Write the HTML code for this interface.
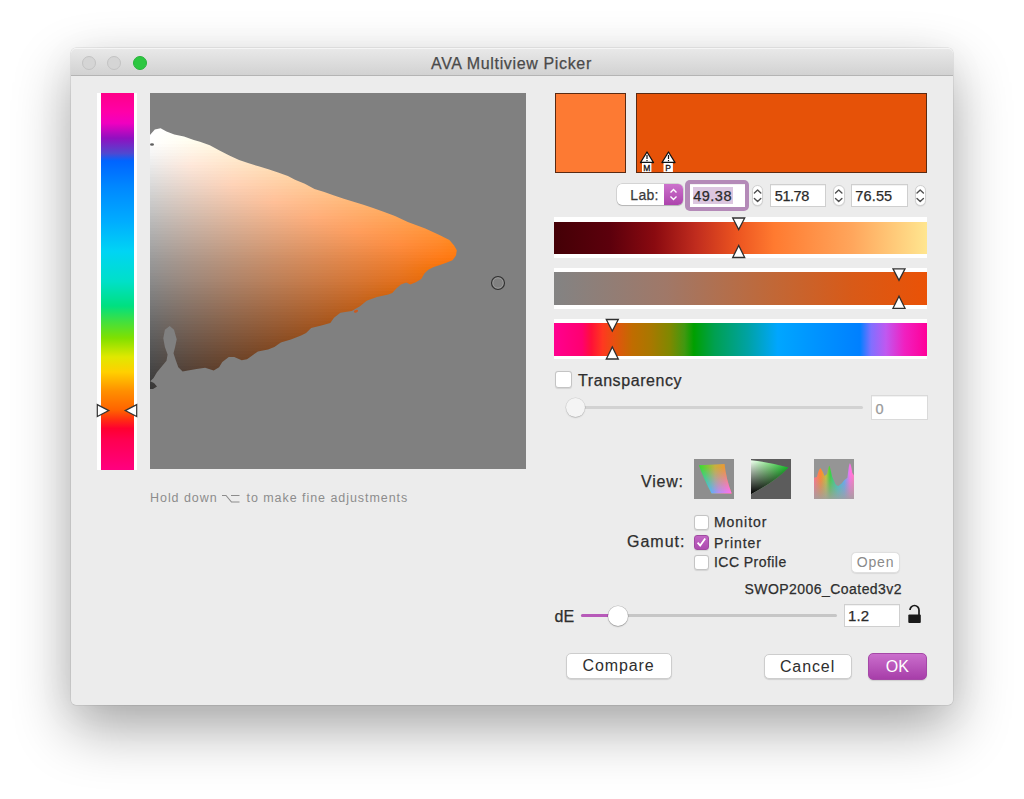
<!DOCTYPE html>
<html><head><meta charset="utf-8">
<style>
html,body{margin:0;padding:0;width:1024px;height:799px;overflow:hidden;background:#ffffff;}
body{position:relative;font-family:"Liberation Sans",sans-serif;}
.a{position:absolute;}
#win{position:absolute;left:71px;top:48px;width:881.5px;height:657px;border-radius:5px;background:#ececec;
 box-shadow:0 0 0 0.5px rgba(0,0,0,0.13),0 24px 58px rgba(0,0,0,0.33),0 8px 40px rgba(0,0,0,0.05);}
#tb{position:absolute;left:71px;top:48px;width:881.5px;height:28px;border-radius:5px 5px 0 0;
 background:linear-gradient(#e9e9e9,#d2d2d2);border-bottom:1px solid #b4b4b4;box-sizing:border-box;box-shadow:inset 0 1px 0 rgba(255,255,255,0.55);}
.tl{position:absolute;width:14px;height:14px;border-radius:50%;box-sizing:border-box;}
.lbl{position:absolute;color:#2e2e2e;white-space:nowrap;line-height:1;-webkit-text-stroke:0.25px currentColor;}
.cb{position:absolute;width:15px;height:15px;box-sizing:border-box;border-radius:3px;background:#fff;border:1px solid #c4c4c4;box-shadow:0 0.5px 1px rgba(0,0,0,0.1);}
.fld{position:absolute;background:#fff;border:1px solid #cfcfcf;box-sizing:border-box;box-shadow:inset 0 1px 0 rgba(0,0,0,0.05);}
.btn{position:absolute;background:#fff;border-radius:5px;box-sizing:border-box;border:1px solid #cdcdcd;box-shadow:0 1px 1px rgba(0,0,0,0.12);color:#2e2e2e;font-size:16px;text-align:center;}
.step{position:absolute;width:12px;height:21px;box-sizing:border-box;border-radius:6px;background:#fff;border:1px solid #d0d0d0;box-shadow:0 0.5px 1px rgba(0,0,0,0.1);}
</style></head><body>
<div id="win"></div>
<div id="tb"></div>
<div class="tl" style="left:82.4px;top:55.5px;background:#d5d5d5;border:1px solid #c3c3c3;"></div>
<div class="tl" style="left:107.4px;top:55.5px;background:#d5d5d5;border:1px solid #c3c3c3;"></div>
<div class="tl" style="left:132.9px;top:55.5px;background:#2dc741;border:1px solid #27b33a;"></div>
<div class="lbl" style="left:431px;top:56px;font-size:16px;letter-spacing:0.65px;color:#4a4a4a;">AVA Multiview Picker</div>

<!-- hue strip -->
<div class="a" style="left:96.8px;top:92.5px;width:40.4px;height:377px;background:#fff;"></div>
<div class="a" style="left:100.5px;top:92.5px;width:33px;height:377px;background:linear-gradient(to bottom,#ff0088 0%,#ff00a8 5%,#f000c0 8%,#9010c0 12%,#5048d0 16%,#0064ff 18%,#0088ff 25%,#00acff 34%,#00d4f4 42%,#00e0c8 50%,#00e080 56.5%,#40e040 60.5%,#80e000 65%,#e0e800 70%,#ffd000 74%,#ff9000 79%,#ff6400 84%,#ff3010 86.5%,#ff0030 89%,#ff0050 92%,#ff0080 100%);"></div>
<svg class="a" style="left:0;top:0" width="1024" height="799">
<polygon points="97.3,404.6 108.8,410.6 97.3,416.6" fill="#fff" stroke="#333" stroke-width="1.2" stroke-linejoin="miter"/>
<polygon points="136.7,404.6 125.2,410.6 136.7,416.6" fill="#fff" stroke="#333" stroke-width="1.2"/>
</svg>

<!-- plot -->
<div class="a" style="left:150px;top:92.5px;width:376.4px;height:376px;background:#808080;"></div>
<svg width="1024" height="799" style="position:absolute;left:0;top:0">
<defs><clipPath id="shp"><polygon points="149.5,135.5 154.8,129.6 160.6,128.2 166.5,131.6 174.3,134.5 184.0,136.5 193.8,139.9 200.0,141.8 209.8,145.3 219.5,150.6 229.3,155.5 239.1,159.9 248.8,163.3 258.6,166.3 268.4,169.2 278.1,172.6 287.9,176.0 295.0,179.8 304.8,183.7 314.5,189.0 324.3,192.0 334.1,195.4 343.8,198.8 353.6,201.7 363.4,204.7 373.1,208.1 382.9,211.5 395.0,215.9 407.8,222.0 425.3,228.4 439.4,234.9 449.4,240.0 454.1,245.5 456.8,250.2 456.0,255.6 452.5,260.3 446.3,262.7 440.0,265.0 433.8,267.0 428.3,269.7 424.4,273.6 421.3,279.0 415.8,282.2 410.3,284.5 406.4,282.6 400.9,284.5 396.3,288.4 392.3,293.1 388.3,294.5 376.9,297.0 366.7,300.8 360.4,305.9 355.3,309.0 351.8,310.9 340.4,312.8 334.0,317.8 330.3,322.9 321.4,325.5 311.2,328.0 306.1,333.1 301.1,335.6 290.9,339.4 280.8,342.6 274.4,347.0 268.1,349.6 257.9,351.5 251.6,355.9 247.0,359.2 241.7,360.3 234.2,357.1 228.8,357.1 222.3,361.9 219.1,367.3 213.7,370.5 205.1,367.8 196.6,368.9 188.0,370.5 182.6,371.6 178.3,367.3 175.6,359.7 173.5,353.3 175.1,346.9 176.7,339.3 174.0,329.7 169.7,325.9 164.9,329.7 163.3,338.3 164.9,346.9 167.6,354.4 166.5,360.8 161.1,367.3 156.8,372.6 153.6,378.0 150.2,381.2 154.0,383.0 157.0,386.5 153.0,389.0 149.5,389.0"/></clipPath><linearGradient id="g0" gradientUnits="userSpaceOnUse" x1="150.4" y1="0" x2="481.3" y2="0"><stop offset="0.000" stop-color="#ffffff"/><stop offset="0.125" stop-color="#fffffb"/><stop offset="0.250" stop-color="#ffffe9"/><stop offset="0.375" stop-color="#ffffd7"/><stop offset="0.500" stop-color="#fffdc5"/><stop offset="0.625" stop-color="#fff9b3"/><stop offset="0.750" stop-color="#fff4a0"/><stop offset="0.875" stop-color="#ffee8c"/><stop offset="1.000" stop-color="#ffe777"/></linearGradient><linearGradient id="g1" gradientUnits="userSpaceOnUse" x1="150.4" y1="0" x2="481.3" y2="0"><stop offset="0.000" stop-color="#ffffff"/><stop offset="0.125" stop-color="#fffff8"/><stop offset="0.250" stop-color="#ffffe6"/><stop offset="0.375" stop-color="#ffffd4"/><stop offset="0.500" stop-color="#fffac2"/><stop offset="0.625" stop-color="#fff6b0"/><stop offset="0.750" stop-color="#fff19d"/><stop offset="0.875" stop-color="#ffeb89"/><stop offset="1.000" stop-color="#ffe474"/></linearGradient><linearGradient id="g2" gradientUnits="userSpaceOnUse" x1="150.4" y1="0" x2="481.3" y2="0"><stop offset="0.000" stop-color="#ffffff"/><stop offset="0.125" stop-color="#fffff6"/><stop offset="0.250" stop-color="#ffffe4"/><stop offset="0.375" stop-color="#fffcd2"/><stop offset="0.500" stop-color="#fff8c0"/><stop offset="0.625" stop-color="#fff3ad"/><stop offset="0.750" stop-color="#ffee9b"/><stop offset="0.875" stop-color="#ffe887"/><stop offset="1.000" stop-color="#ffe272"/></linearGradient><linearGradient id="g3" gradientUnits="userSpaceOnUse" x1="150.4" y1="0" x2="481.3" y2="0"><stop offset="0.000" stop-color="#ffffff"/><stop offset="0.125" stop-color="#fffff3"/><stop offset="0.250" stop-color="#fffde1"/><stop offset="0.375" stop-color="#fff9cf"/><stop offset="0.500" stop-color="#fff5bd"/><stop offset="0.625" stop-color="#fff0ab"/><stop offset="0.750" stop-color="#ffec98"/><stop offset="0.875" stop-color="#ffe684"/><stop offset="1.000" stop-color="#ffdf6f"/></linearGradient><linearGradient id="g4" gradientUnits="userSpaceOnUse" x1="150.4" y1="0" x2="481.3" y2="0"><stop offset="0.000" stop-color="#ffffff"/><stop offset="0.125" stop-color="#fffef0"/><stop offset="0.250" stop-color="#fffbde"/><stop offset="0.375" stop-color="#fff7cd"/><stop offset="0.500" stop-color="#fff2bb"/><stop offset="0.625" stop-color="#ffeea8"/><stop offset="0.750" stop-color="#ffe996"/><stop offset="0.875" stop-color="#ffe382"/><stop offset="1.000" stop-color="#ffdc6c"/></linearGradient><linearGradient id="g5" gradientUnits="userSpaceOnUse" x1="150.4" y1="0" x2="481.3" y2="0"><stop offset="0.000" stop-color="#ffffff"/><stop offset="0.125" stop-color="#fffcee"/><stop offset="0.250" stop-color="#fff8dc"/><stop offset="0.375" stop-color="#fff4ca"/><stop offset="0.500" stop-color="#fff0b8"/><stop offset="0.625" stop-color="#ffeba6"/><stop offset="0.750" stop-color="#ffe693"/><stop offset="0.875" stop-color="#ffe07f"/><stop offset="1.000" stop-color="#ffda6a"/></linearGradient><linearGradient id="g6" gradientUnits="userSpaceOnUse" x1="150.4" y1="0" x2="481.3" y2="0"><stop offset="0.000" stop-color="#fdfdfd"/><stop offset="0.125" stop-color="#fff9eb"/><stop offset="0.250" stop-color="#fff5d9"/><stop offset="0.375" stop-color="#fff1c7"/><stop offset="0.500" stop-color="#ffedb5"/><stop offset="0.625" stop-color="#ffe8a3"/><stop offset="0.750" stop-color="#ffe391"/><stop offset="0.875" stop-color="#ffde7d"/><stop offset="1.000" stop-color="#ffd767"/></linearGradient><linearGradient id="g7" gradientUnits="userSpaceOnUse" x1="150.4" y1="0" x2="481.3" y2="0"><stop offset="0.000" stop-color="#fafafa"/><stop offset="0.125" stop-color="#fff6e8"/><stop offset="0.250" stop-color="#fff3d7"/><stop offset="0.375" stop-color="#ffeec5"/><stop offset="0.500" stop-color="#ffeab3"/><stop offset="0.625" stop-color="#ffe6a1"/><stop offset="0.750" stop-color="#ffe18e"/><stop offset="0.875" stop-color="#ffdb7a"/><stop offset="1.000" stop-color="#ffd465"/></linearGradient><linearGradient id="g8" gradientUnits="userSpaceOnUse" x1="150.4" y1="0" x2="481.3" y2="0"><stop offset="0.000" stop-color="#f7f7f7"/><stop offset="0.125" stop-color="#fff4e6"/><stop offset="0.250" stop-color="#fff0d4"/><stop offset="0.375" stop-color="#ffecc2"/><stop offset="0.500" stop-color="#ffe7b0"/><stop offset="0.625" stop-color="#ffe39e"/><stop offset="0.750" stop-color="#ffde8c"/><stop offset="0.875" stop-color="#ffd878"/><stop offset="1.000" stop-color="#ffd162"/></linearGradient><linearGradient id="g9" gradientUnits="userSpaceOnUse" x1="150.4" y1="0" x2="481.3" y2="0"><stop offset="0.000" stop-color="#f5f5f5"/><stop offset="0.125" stop-color="#fff1e3"/><stop offset="0.250" stop-color="#ffedd1"/><stop offset="0.375" stop-color="#ffe9c0"/><stop offset="0.500" stop-color="#ffe5ae"/><stop offset="0.625" stop-color="#ffe09c"/><stop offset="0.750" stop-color="#ffdb89"/><stop offset="0.875" stop-color="#ffd575"/><stop offset="1.000" stop-color="#ffcf5f"/></linearGradient><linearGradient id="g10" gradientUnits="userSpaceOnUse" x1="150.4" y1="0" x2="481.3" y2="0"><stop offset="0.000" stop-color="#f2f2f2"/><stop offset="0.125" stop-color="#ffeee0"/><stop offset="0.250" stop-color="#ffeacf"/><stop offset="0.375" stop-color="#ffe6bd"/><stop offset="0.500" stop-color="#ffe2ab"/><stop offset="0.625" stop-color="#ffde99"/><stop offset="0.750" stop-color="#ffd987"/><stop offset="0.875" stop-color="#ffd373"/><stop offset="1.000" stop-color="#ffcc5d"/></linearGradient><linearGradient id="g11" gradientUnits="userSpaceOnUse" x1="150.4" y1="0" x2="481.3" y2="0"><stop offset="0.000" stop-color="#efefef"/><stop offset="0.125" stop-color="#ffecde"/><stop offset="0.250" stop-color="#ffe8cc"/><stop offset="0.375" stop-color="#ffe4ba"/><stop offset="0.500" stop-color="#ffdfa9"/><stop offset="0.625" stop-color="#ffdb97"/><stop offset="0.750" stop-color="#ffd684"/><stop offset="0.875" stop-color="#ffd070"/><stop offset="1.000" stop-color="#ffc95a"/></linearGradient><linearGradient id="g12" gradientUnits="userSpaceOnUse" x1="150.4" y1="0" x2="481.3" y2="0"><stop offset="0.000" stop-color="#ededed"/><stop offset="0.125" stop-color="#ffe9db"/><stop offset="0.250" stop-color="#ffe5ca"/><stop offset="0.375" stop-color="#ffe1b8"/><stop offset="0.500" stop-color="#ffdda6"/><stop offset="0.625" stop-color="#ffd894"/><stop offset="0.750" stop-color="#ffd382"/><stop offset="0.875" stop-color="#ffcd6e"/><stop offset="1.000" stop-color="#ffc758"/></linearGradient><linearGradient id="g13" gradientUnits="userSpaceOnUse" x1="150.4" y1="0" x2="481.3" y2="0"><stop offset="0.000" stop-color="#eaeaea"/><stop offset="0.125" stop-color="#fee6d8"/><stop offset="0.250" stop-color="#ffe3c7"/><stop offset="0.375" stop-color="#ffdeb5"/><stop offset="0.500" stop-color="#ffdaa4"/><stop offset="0.625" stop-color="#ffd692"/><stop offset="0.750" stop-color="#ffd17f"/><stop offset="0.875" stop-color="#ffcb6b"/><stop offset="1.000" stop-color="#ffc455"/></linearGradient><linearGradient id="g14" gradientUnits="userSpaceOnUse" x1="150.4" y1="0" x2="481.3" y2="0"><stop offset="0.000" stop-color="#e7e7e7"/><stop offset="0.125" stop-color="#fbe4d6"/><stop offset="0.250" stop-color="#ffe0c4"/><stop offset="0.375" stop-color="#ffdcb3"/><stop offset="0.500" stop-color="#ffd8a1"/><stop offset="0.625" stop-color="#ffd38f"/><stop offset="0.750" stop-color="#ffce7d"/><stop offset="0.875" stop-color="#ffc869"/><stop offset="1.000" stop-color="#ffc152"/></linearGradient><linearGradient id="g15" gradientUnits="userSpaceOnUse" x1="150.4" y1="0" x2="481.3" y2="0"><stop offset="0.000" stop-color="#e5e5e5"/><stop offset="0.125" stop-color="#f8e1d3"/><stop offset="0.250" stop-color="#ffddc2"/><stop offset="0.375" stop-color="#ffd9b0"/><stop offset="0.500" stop-color="#ffd59f"/><stop offset="0.625" stop-color="#ffd08d"/><stop offset="0.750" stop-color="#ffcb7a"/><stop offset="0.875" stop-color="#ffc566"/><stop offset="1.000" stop-color="#ffbf50"/></linearGradient><linearGradient id="g16" gradientUnits="userSpaceOnUse" x1="150.4" y1="0" x2="481.3" y2="0"><stop offset="0.000" stop-color="#e2e2e2"/><stop offset="0.125" stop-color="#f6ded1"/><stop offset="0.250" stop-color="#ffdbbf"/><stop offset="0.375" stop-color="#ffd7ae"/><stop offset="0.500" stop-color="#ffd29c"/><stop offset="0.625" stop-color="#ffce8a"/><stop offset="0.750" stop-color="#ffc978"/><stop offset="0.875" stop-color="#ffc364"/><stop offset="1.000" stop-color="#ffbc4d"/></linearGradient><linearGradient id="g17" gradientUnits="userSpaceOnUse" x1="150.4" y1="0" x2="481.3" y2="0"><stop offset="0.000" stop-color="#dfdfdf"/><stop offset="0.125" stop-color="#f3dcce"/><stop offset="0.250" stop-color="#ffd8bd"/><stop offset="0.375" stop-color="#ffd4ab"/><stop offset="0.500" stop-color="#ffd09a"/><stop offset="0.625" stop-color="#ffcb88"/><stop offset="0.750" stop-color="#ffc675"/><stop offset="0.875" stop-color="#ffc061"/><stop offset="1.000" stop-color="#ffb94b"/></linearGradient><linearGradient id="g18" gradientUnits="userSpaceOnUse" x1="150.4" y1="0" x2="481.3" y2="0"><stop offset="0.000" stop-color="#dddddd"/><stop offset="0.125" stop-color="#f0d9cb"/><stop offset="0.250" stop-color="#ffd5ba"/><stop offset="0.375" stop-color="#ffd1a9"/><stop offset="0.500" stop-color="#ffcd97"/><stop offset="0.625" stop-color="#ffc885"/><stop offset="0.750" stop-color="#ffc373"/><stop offset="0.875" stop-color="#ffbd5f"/><stop offset="1.000" stop-color="#ffb748"/></linearGradient><linearGradient id="g19" gradientUnits="userSpaceOnUse" x1="150.4" y1="0" x2="481.3" y2="0"><stop offset="0.000" stop-color="#dadada"/><stop offset="0.125" stop-color="#eed6c9"/><stop offset="0.250" stop-color="#ffd3b7"/><stop offset="0.375" stop-color="#ffcfa6"/><stop offset="0.500" stop-color="#ffca95"/><stop offset="0.625" stop-color="#ffc683"/><stop offset="0.750" stop-color="#ffc170"/><stop offset="0.875" stop-color="#ffbb5c"/><stop offset="1.000" stop-color="#ffb445"/></linearGradient><linearGradient id="g20" gradientUnits="userSpaceOnUse" x1="150.4" y1="0" x2="481.3" y2="0"><stop offset="0.000" stop-color="#d7d7d7"/><stop offset="0.125" stop-color="#ebd4c6"/><stop offset="0.250" stop-color="#fcd0b5"/><stop offset="0.375" stop-color="#ffcca4"/><stop offset="0.500" stop-color="#ffc892"/><stop offset="0.625" stop-color="#ffc380"/><stop offset="0.750" stop-color="#ffbe6e"/><stop offset="0.875" stop-color="#ffb85a"/><stop offset="1.000" stop-color="#ffb143"/></linearGradient><linearGradient id="g21" gradientUnits="userSpaceOnUse" x1="150.4" y1="0" x2="481.3" y2="0"><stop offset="0.000" stop-color="#d5d5d5"/><stop offset="0.125" stop-color="#e8d1c4"/><stop offset="0.250" stop-color="#facdb2"/><stop offset="0.375" stop-color="#ffc9a1"/><stop offset="0.500" stop-color="#ffc590"/><stop offset="0.625" stop-color="#ffc17e"/><stop offset="0.750" stop-color="#ffbc6b"/><stop offset="0.875" stop-color="#ffb657"/><stop offset="1.000" stop-color="#ffaf40"/></linearGradient><linearGradient id="g22" gradientUnits="userSpaceOnUse" x1="150.4" y1="0" x2="481.3" y2="0"><stop offset="0.000" stop-color="#d2d2d2"/><stop offset="0.125" stop-color="#e6cfc1"/><stop offset="0.250" stop-color="#f7cbb0"/><stop offset="0.375" stop-color="#ffc79f"/><stop offset="0.500" stop-color="#ffc38d"/><stop offset="0.625" stop-color="#ffbe7b"/><stop offset="0.750" stop-color="#ffb969"/><stop offset="0.875" stop-color="#ffb355"/><stop offset="1.000" stop-color="#ffac3d"/></linearGradient><linearGradient id="g23" gradientUnits="userSpaceOnUse" x1="150.4" y1="0" x2="481.3" y2="0"><stop offset="0.000" stop-color="#d0d0cf"/><stop offset="0.125" stop-color="#e3ccbe"/><stop offset="0.250" stop-color="#f4c8ad"/><stop offset="0.375" stop-color="#ffc49c"/><stop offset="0.500" stop-color="#ffc08b"/><stop offset="0.625" stop-color="#ffbb79"/><stop offset="0.750" stop-color="#ffb666"/><stop offset="0.875" stop-color="#ffb052"/><stop offset="1.000" stop-color="#ffa93a"/></linearGradient><linearGradient id="g24" gradientUnits="userSpaceOnUse" x1="150.4" y1="0" x2="481.3" y2="0"><stop offset="0.000" stop-color="#cdcdcd"/><stop offset="0.125" stop-color="#e0c9bc"/><stop offset="0.250" stop-color="#f2c6ab"/><stop offset="0.375" stop-color="#ffc29a"/><stop offset="0.500" stop-color="#ffbd88"/><stop offset="0.625" stop-color="#ffb977"/><stop offset="0.750" stop-color="#ffb464"/><stop offset="0.875" stop-color="#ffae50"/><stop offset="1.000" stop-color="#ffa738"/></linearGradient><linearGradient id="g25" gradientUnits="userSpaceOnUse" x1="150.4" y1="0" x2="481.3" y2="0"><stop offset="0.000" stop-color="#cacaca"/><stop offset="0.125" stop-color="#dec7b9"/><stop offset="0.250" stop-color="#efc3a8"/><stop offset="0.375" stop-color="#ffbf97"/><stop offset="0.500" stop-color="#ffbb86"/><stop offset="0.625" stop-color="#ffb674"/><stop offset="0.750" stop-color="#ffb162"/><stop offset="0.875" stop-color="#ffab4d"/><stop offset="1.000" stop-color="#ffa435"/></linearGradient><linearGradient id="g26" gradientUnits="userSpaceOnUse" x1="150.4" y1="0" x2="481.3" y2="0"><stop offset="0.000" stop-color="#c8c8c8"/><stop offset="0.125" stop-color="#dbc4b7"/><stop offset="0.250" stop-color="#ecc1a6"/><stop offset="0.375" stop-color="#fcbd95"/><stop offset="0.500" stop-color="#ffb883"/><stop offset="0.625" stop-color="#ffb472"/><stop offset="0.750" stop-color="#ffaf5f"/><stop offset="0.875" stop-color="#ffa94b"/><stop offset="1.000" stop-color="#ffa232"/></linearGradient><linearGradient id="g27" gradientUnits="userSpaceOnUse" x1="150.4" y1="0" x2="481.3" y2="0"><stop offset="0.000" stop-color="#c5c5c5"/><stop offset="0.125" stop-color="#d8c2b4"/><stop offset="0.250" stop-color="#e9bea3"/><stop offset="0.375" stop-color="#f9ba92"/><stop offset="0.500" stop-color="#ffb681"/><stop offset="0.625" stop-color="#ffb16f"/><stop offset="0.750" stop-color="#ffac5d"/><stop offset="0.875" stop-color="#ffa648"/><stop offset="1.000" stop-color="#ff9f2f"/></linearGradient><linearGradient id="g28" gradientUnits="userSpaceOnUse" x1="150.4" y1="0" x2="481.3" y2="0"><stop offset="0.000" stop-color="#c3c3c3"/><stop offset="0.125" stop-color="#d6bfb2"/><stop offset="0.250" stop-color="#e7bba1"/><stop offset="0.375" stop-color="#f6b790"/><stop offset="0.500" stop-color="#ffb37f"/><stop offset="0.625" stop-color="#ffae6d"/><stop offset="0.750" stop-color="#ffa95a"/><stop offset="0.875" stop-color="#ffa345"/><stop offset="1.000" stop-color="#ff9c2c"/></linearGradient><linearGradient id="g29" gradientUnits="userSpaceOnUse" x1="150.4" y1="0" x2="481.3" y2="0"><stop offset="0.000" stop-color="#c0c0c0"/><stop offset="0.125" stop-color="#d3bdaf"/><stop offset="0.250" stop-color="#e4b99e"/><stop offset="0.375" stop-color="#f4b58d"/><stop offset="0.500" stop-color="#ffb17c"/><stop offset="0.625" stop-color="#ffac6a"/><stop offset="0.750" stop-color="#ffa758"/><stop offset="0.875" stop-color="#ffa143"/><stop offset="1.000" stop-color="#ff9a29"/></linearGradient><linearGradient id="g30" gradientUnits="userSpaceOnUse" x1="150.4" y1="0" x2="481.3" y2="0"><stop offset="0.000" stop-color="#bdbdbd"/><stop offset="0.125" stop-color="#d0baad"/><stop offset="0.250" stop-color="#e1b69c"/><stop offset="0.375" stop-color="#f1b28b"/><stop offset="0.500" stop-color="#ffae7a"/><stop offset="0.625" stop-color="#ffa968"/><stop offset="0.750" stop-color="#ffa455"/><stop offset="0.875" stop-color="#ff9e40"/><stop offset="1.000" stop-color="#ff9726"/></linearGradient><linearGradient id="g31" gradientUnits="userSpaceOnUse" x1="150.4" y1="0" x2="481.3" y2="0"><stop offset="0.000" stop-color="#bbbbbb"/><stop offset="0.125" stop-color="#ceb7aa"/><stop offset="0.250" stop-color="#dfb499"/><stop offset="0.375" stop-color="#eeb088"/><stop offset="0.500" stop-color="#fcab77"/><stop offset="0.625" stop-color="#ffa766"/><stop offset="0.750" stop-color="#ffa253"/><stop offset="0.875" stop-color="#ff9c3e"/><stop offset="1.000" stop-color="#ff9523"/></linearGradient><linearGradient id="g32" gradientUnits="userSpaceOnUse" x1="150.4" y1="0" x2="481.3" y2="0"><stop offset="0.000" stop-color="#b8b8b8"/><stop offset="0.125" stop-color="#cbb5a8"/><stop offset="0.250" stop-color="#dcb197"/><stop offset="0.375" stop-color="#ebad86"/><stop offset="0.500" stop-color="#faa975"/><stop offset="0.625" stop-color="#ffa463"/><stop offset="0.750" stop-color="#ff9f51"/><stop offset="0.875" stop-color="#ff993b"/><stop offset="1.000" stop-color="#ff921f"/></linearGradient><linearGradient id="g33" gradientUnits="userSpaceOnUse" x1="150.4" y1="0" x2="481.3" y2="0"><stop offset="0.000" stop-color="#b6b6b6"/><stop offset="0.125" stop-color="#c9b2a5"/><stop offset="0.250" stop-color="#d9af94"/><stop offset="0.375" stop-color="#e9ab84"/><stop offset="0.500" stop-color="#f7a672"/><stop offset="0.625" stop-color="#ffa261"/><stop offset="0.750" stop-color="#ff9d4e"/><stop offset="0.875" stop-color="#ff9639"/><stop offset="1.000" stop-color="#ff8f1c"/></linearGradient><linearGradient id="g34" gradientUnits="userSpaceOnUse" x1="150.4" y1="0" x2="481.3" y2="0"><stop offset="0.000" stop-color="#b3b3b3"/><stop offset="0.125" stop-color="#c6b0a3"/><stop offset="0.250" stop-color="#d7ac92"/><stop offset="0.375" stop-color="#e6a881"/><stop offset="0.500" stop-color="#f4a470"/><stop offset="0.625" stop-color="#ff9f5e"/><stop offset="0.750" stop-color="#ff9a4c"/><stop offset="0.875" stop-color="#ff9436"/><stop offset="1.000" stop-color="#ff8d18"/></linearGradient><linearGradient id="g35" gradientUnits="userSpaceOnUse" x1="150.4" y1="0" x2="481.3" y2="0"><stop offset="0.000" stop-color="#b1b1b1"/><stop offset="0.125" stop-color="#c3ada0"/><stop offset="0.250" stop-color="#d4aa90"/><stop offset="0.375" stop-color="#e3a67f"/><stop offset="0.500" stop-color="#f1a16e"/><stop offset="0.625" stop-color="#fe9d5c"/><stop offset="0.750" stop-color="#ff9849"/><stop offset="0.875" stop-color="#ff9134"/><stop offset="1.000" stop-color="#ff8a14"/></linearGradient><linearGradient id="g36" gradientUnits="userSpaceOnUse" x1="150.4" y1="0" x2="481.3" y2="0"><stop offset="0.000" stop-color="#aeaeae"/><stop offset="0.125" stop-color="#c1ab9e"/><stop offset="0.250" stop-color="#d1a78d"/><stop offset="0.375" stop-color="#e0a37c"/><stop offset="0.500" stop-color="#ee9f6b"/><stop offset="0.625" stop-color="#fb9a5a"/><stop offset="0.750" stop-color="#ff9547"/><stop offset="0.875" stop-color="#ff8f31"/><stop offset="1.000" stop-color="#ff880f"/></linearGradient><linearGradient id="g37" gradientUnits="userSpaceOnUse" x1="150.4" y1="0" x2="481.3" y2="0"><stop offset="0.000" stop-color="#acacac"/><stop offset="0.125" stop-color="#bea89b"/><stop offset="0.250" stop-color="#cfa58b"/><stop offset="0.375" stop-color="#dea17a"/><stop offset="0.500" stop-color="#eb9c69"/><stop offset="0.625" stop-color="#f89857"/><stop offset="0.750" stop-color="#ff9345"/><stop offset="0.875" stop-color="#ff8c2e"/><stop offset="1.000" stop-color="#ff8509"/></linearGradient><linearGradient id="g38" gradientUnits="userSpaceOnUse" x1="150.4" y1="0" x2="481.3" y2="0"><stop offset="0.000" stop-color="#a9a9a9"/><stop offset="0.125" stop-color="#bca699"/><stop offset="0.250" stop-color="#cca288"/><stop offset="0.375" stop-color="#db9e78"/><stop offset="0.500" stop-color="#e99a67"/><stop offset="0.625" stop-color="#f69555"/><stop offset="0.750" stop-color="#ff9042"/><stop offset="0.875" stop-color="#ff8a2b"/><stop offset="1.000" stop-color="#ff8203"/></linearGradient><linearGradient id="g39" gradientUnits="userSpaceOnUse" x1="150.4" y1="0" x2="481.3" y2="0"><stop offset="0.000" stop-color="#a7a7a7"/><stop offset="0.125" stop-color="#b9a396"/><stop offset="0.250" stop-color="#c9a086"/><stop offset="0.375" stop-color="#d89c75"/><stop offset="0.500" stop-color="#e69764"/><stop offset="0.625" stop-color="#f39353"/><stop offset="0.750" stop-color="#ff8d40"/><stop offset="0.875" stop-color="#ff8728"/><stop offset="1.000" stop-color="#ff8000"/></linearGradient><linearGradient id="g40" gradientUnits="userSpaceOnUse" x1="150.4" y1="0" x2="481.3" y2="0"><stop offset="0.000" stop-color="#a4a4a4"/><stop offset="0.125" stop-color="#b7a194"/><stop offset="0.250" stop-color="#c79d83"/><stop offset="0.375" stop-color="#d69973"/><stop offset="0.500" stop-color="#e39562"/><stop offset="0.625" stop-color="#f09050"/><stop offset="0.750" stop-color="#fc8b3d"/><stop offset="0.875" stop-color="#ff8425"/><stop offset="1.000" stop-color="#ff7d00"/></linearGradient><linearGradient id="g41" gradientUnits="userSpaceOnUse" x1="150.4" y1="0" x2="481.3" y2="0"><stop offset="0.000" stop-color="#a2a2a2"/><stop offset="0.125" stop-color="#b49e91"/><stop offset="0.250" stop-color="#c49b81"/><stop offset="0.375" stop-color="#d39770"/><stop offset="0.500" stop-color="#e1925f"/><stop offset="0.625" stop-color="#ee8d4d"/><stop offset="0.750" stop-color="#fa883a"/><stop offset="0.875" stop-color="#ff8221"/><stop offset="1.000" stop-color="#ff7a00"/></linearGradient><linearGradient id="g42" gradientUnits="userSpaceOnUse" x1="150.4" y1="0" x2="481.3" y2="0"><stop offset="0.000" stop-color="#9f9f9f"/><stop offset="0.125" stop-color="#b29c8f"/><stop offset="0.250" stop-color="#c2987e"/><stop offset="0.375" stop-color="#d1946d"/><stop offset="0.500" stop-color="#de905c"/><stop offset="0.625" stop-color="#eb8b4a"/><stop offset="0.750" stop-color="#f78537"/><stop offset="0.875" stop-color="#ff7f1d"/><stop offset="1.000" stop-color="#ff7700"/></linearGradient><linearGradient id="g43" gradientUnits="userSpaceOnUse" x1="150.4" y1="0" x2="481.3" y2="0"><stop offset="0.000" stop-color="#9d9d9d"/><stop offset="0.125" stop-color="#af998c"/><stop offset="0.250" stop-color="#bf967c"/><stop offset="0.375" stop-color="#ce916b"/><stop offset="0.500" stop-color="#dc8d5a"/><stop offset="0.625" stop-color="#e88848"/><stop offset="0.750" stop-color="#f48334"/><stop offset="0.875" stop-color="#ff7c19"/><stop offset="1.000" stop-color="#ff7400"/></linearGradient><linearGradient id="g44" gradientUnits="userSpaceOnUse" x1="150.4" y1="0" x2="481.3" y2="0"><stop offset="0.000" stop-color="#9a9a9a"/><stop offset="0.125" stop-color="#ad978a"/><stop offset="0.250" stop-color="#bd9379"/><stop offset="0.375" stop-color="#cb8f68"/><stop offset="0.500" stop-color="#d98a57"/><stop offset="0.625" stop-color="#e68645"/><stop offset="0.750" stop-color="#f28031"/><stop offset="0.875" stop-color="#fc7914"/><stop offset="1.000" stop-color="#ff7200"/></linearGradient><linearGradient id="g45" gradientUnits="userSpaceOnUse" x1="150.4" y1="0" x2="481.3" y2="0"><stop offset="0.000" stop-color="#989898"/><stop offset="0.125" stop-color="#aa9487"/><stop offset="0.250" stop-color="#ba9177"/><stop offset="0.375" stop-color="#c98d66"/><stop offset="0.500" stop-color="#d78855"/><stop offset="0.625" stop-color="#e38342"/><stop offset="0.750" stop-color="#ef7e2e"/><stop offset="0.875" stop-color="#fa770f"/><stop offset="1.000" stop-color="#ff6f00"/></linearGradient><linearGradient id="g46" gradientUnits="userSpaceOnUse" x1="150.4" y1="0" x2="481.3" y2="0"><stop offset="0.000" stop-color="#969696"/><stop offset="0.125" stop-color="#a89285"/><stop offset="0.250" stop-color="#b88f75"/><stop offset="0.375" stop-color="#c78a64"/><stop offset="0.500" stop-color="#d48652"/><stop offset="0.625" stop-color="#e18140"/><stop offset="0.750" stop-color="#ed7b2b"/><stop offset="0.875" stop-color="#f7740a"/><stop offset="1.000" stop-color="#ff6c00"/></linearGradient><linearGradient id="g47" gradientUnits="userSpaceOnUse" x1="150.4" y1="0" x2="481.3" y2="0"><stop offset="0.000" stop-color="#949494"/><stop offset="0.125" stop-color="#a69083"/><stop offset="0.250" stop-color="#b68c72"/><stop offset="0.375" stop-color="#c58861"/><stop offset="0.500" stop-color="#d28450"/><stop offset="0.625" stop-color="#df7f3e"/><stop offset="0.750" stop-color="#eb7928"/><stop offset="0.875" stop-color="#f57204"/><stop offset="1.000" stop-color="#ff6a00"/></linearGradient><linearGradient id="g48" gradientUnits="userSpaceOnUse" x1="150.4" y1="0" x2="481.3" y2="0"><stop offset="0.000" stop-color="#929292"/><stop offset="0.125" stop-color="#a48e81"/><stop offset="0.250" stop-color="#b48a70"/><stop offset="0.375" stop-color="#c3865f"/><stop offset="0.500" stop-color="#d0824e"/><stop offset="0.625" stop-color="#dc7c3b"/><stop offset="0.750" stop-color="#e87725"/><stop offset="0.875" stop-color="#f37000"/><stop offset="1.000" stop-color="#fc6700"/></linearGradient><linearGradient id="g49" gradientUnits="userSpaceOnUse" x1="150.4" y1="0" x2="481.3" y2="0"><stop offset="0.000" stop-color="#908f8f"/><stop offset="0.125" stop-color="#a28c7f"/><stop offset="0.250" stop-color="#b2886e"/><stop offset="0.375" stop-color="#c0845d"/><stop offset="0.500" stop-color="#ce7f4c"/><stop offset="0.625" stop-color="#da7a39"/><stop offset="0.750" stop-color="#e67523"/><stop offset="0.875" stop-color="#f06d00"/><stop offset="1.000" stop-color="#fa6500"/></linearGradient><linearGradient id="g50" gradientUnits="userSpaceOnUse" x1="150.4" y1="0" x2="481.3" y2="0"><stop offset="0.000" stop-color="#8d8d8d"/><stop offset="0.125" stop-color="#a08a7d"/><stop offset="0.250" stop-color="#b0866c"/><stop offset="0.375" stop-color="#be825b"/><stop offset="0.500" stop-color="#cc7d49"/><stop offset="0.625" stop-color="#d87836"/><stop offset="0.750" stop-color="#e47220"/><stop offset="0.875" stop-color="#ee6b00"/><stop offset="1.000" stop-color="#f86200"/></linearGradient><linearGradient id="g51" gradientUnits="userSpaceOnUse" x1="150.4" y1="0" x2="481.3" y2="0"><stop offset="0.000" stop-color="#8b8b8b"/><stop offset="0.125" stop-color="#9e887b"/><stop offset="0.250" stop-color="#ae846a"/><stop offset="0.375" stop-color="#bc8059"/><stop offset="0.500" stop-color="#c97b47"/><stop offset="0.625" stop-color="#d67634"/><stop offset="0.750" stop-color="#e2701d"/><stop offset="0.875" stop-color="#ec6900"/><stop offset="1.000" stop-color="#f56000"/></linearGradient><linearGradient id="g52" gradientUnits="userSpaceOnUse" x1="150.4" y1="0" x2="481.3" y2="0"><stop offset="0.000" stop-color="#898989"/><stop offset="0.125" stop-color="#9b8578"/><stop offset="0.250" stop-color="#ab8167"/><stop offset="0.375" stop-color="#ba7d56"/><stop offset="0.500" stop-color="#c77845"/><stop offset="0.625" stop-color="#d37331"/><stop offset="0.750" stop-color="#df6d19"/><stop offset="0.875" stop-color="#e96600"/><stop offset="1.000" stop-color="#f35d00"/></linearGradient><linearGradient id="g53" gradientUnits="userSpaceOnUse" x1="150.4" y1="0" x2="481.3" y2="0"><stop offset="0.000" stop-color="#868686"/><stop offset="0.125" stop-color="#998376"/><stop offset="0.250" stop-color="#a97f65"/><stop offset="0.375" stop-color="#b77b54"/><stop offset="0.500" stop-color="#c47642"/><stop offset="0.625" stop-color="#d0712e"/><stop offset="0.750" stop-color="#dc6b15"/><stop offset="0.875" stop-color="#e66300"/><stop offset="1.000" stop-color="#f05a00"/></linearGradient><linearGradient id="g54" gradientUnits="userSpaceOnUse" x1="150.4" y1="0" x2="481.3" y2="0"><stop offset="0.000" stop-color="#848484"/><stop offset="0.125" stop-color="#968073"/><stop offset="0.250" stop-color="#a67c62"/><stop offset="0.375" stop-color="#b47851"/><stop offset="0.500" stop-color="#c1733f"/><stop offset="0.625" stop-color="#ce6e2c"/><stop offset="0.750" stop-color="#d96811"/><stop offset="0.875" stop-color="#e46000"/><stop offset="1.000" stop-color="#ed5700"/></linearGradient><linearGradient id="g55" gradientUnits="userSpaceOnUse" x1="150.4" y1="0" x2="481.3" y2="0"><stop offset="0.000" stop-color="#818181"/><stop offset="0.125" stop-color="#947e71"/><stop offset="0.250" stop-color="#a47a60"/><stop offset="0.375" stop-color="#b2764f"/><stop offset="0.500" stop-color="#bf713d"/><stop offset="0.625" stop-color="#cb6b29"/><stop offset="0.750" stop-color="#d6650c"/><stop offset="0.875" stop-color="#e15e00"/><stop offset="1.000" stop-color="#ea5400"/></linearGradient><linearGradient id="g56" gradientUnits="userSpaceOnUse" x1="150.4" y1="0" x2="481.3" y2="0"><stop offset="0.000" stop-color="#7f7f7f"/><stop offset="0.125" stop-color="#917b6e"/><stop offset="0.250" stop-color="#a1785d"/><stop offset="0.375" stop-color="#af734c"/><stop offset="0.500" stop-color="#bc6e3a"/><stop offset="0.625" stop-color="#c86926"/><stop offset="0.750" stop-color="#d46306"/><stop offset="0.875" stop-color="#de5b00"/><stop offset="1.000" stop-color="#e75100"/></linearGradient><linearGradient id="g57" gradientUnits="userSpaceOnUse" x1="150.4" y1="0" x2="481.3" y2="0"><stop offset="0.000" stop-color="#7d7d7d"/><stop offset="0.125" stop-color="#8f796c"/><stop offset="0.250" stop-color="#9f755b"/><stop offset="0.375" stop-color="#ad714a"/><stop offset="0.500" stop-color="#ba6c38"/><stop offset="0.625" stop-color="#c66623"/><stop offset="0.750" stop-color="#d16001"/><stop offset="0.875" stop-color="#db5800"/><stop offset="1.000" stop-color="#e44e00"/></linearGradient><linearGradient id="g58" gradientUnits="userSpaceOnUse" x1="150.4" y1="0" x2="481.3" y2="0"><stop offset="0.000" stop-color="#7a7a7a"/><stop offset="0.125" stop-color="#8c7769"/><stop offset="0.250" stop-color="#9c7359"/><stop offset="0.375" stop-color="#aa6e47"/><stop offset="0.500" stop-color="#b76935"/><stop offset="0.625" stop-color="#c36420"/><stop offset="0.750" stop-color="#ce5d00"/><stop offset="0.875" stop-color="#d85500"/><stop offset="1.000" stop-color="#e24b00"/></linearGradient><linearGradient id="g59" gradientUnits="userSpaceOnUse" x1="150.4" y1="0" x2="481.3" y2="0"><stop offset="0.000" stop-color="#787878"/><stop offset="0.125" stop-color="#8a7467"/><stop offset="0.250" stop-color="#9a7056"/><stop offset="0.375" stop-color="#a86c45"/><stop offset="0.500" stop-color="#b46732"/><stop offset="0.625" stop-color="#c0611d"/><stop offset="0.750" stop-color="#cb5b00"/><stop offset="0.875" stop-color="#d55200"/><stop offset="1.000" stop-color="#df4800"/></linearGradient><linearGradient id="g60" gradientUnits="userSpaceOnUse" x1="150.4" y1="0" x2="481.3" y2="0"><stop offset="0.000" stop-color="#757575"/><stop offset="0.125" stop-color="#887265"/><stop offset="0.250" stop-color="#976e54"/><stop offset="0.375" stop-color="#a56942"/><stop offset="0.500" stop-color="#b26430"/><stop offset="0.625" stop-color="#be5f1a"/><stop offset="0.750" stop-color="#c95800"/><stop offset="0.875" stop-color="#d34f00"/><stop offset="1.000" stop-color="#dc4500"/></linearGradient><linearGradient id="g61" gradientUnits="userSpaceOnUse" x1="150.4" y1="0" x2="481.3" y2="0"><stop offset="0.000" stop-color="#737373"/><stop offset="0.125" stop-color="#856f62"/><stop offset="0.250" stop-color="#956b51"/><stop offset="0.375" stop-color="#a26740"/><stop offset="0.500" stop-color="#af622d"/><stop offset="0.625" stop-color="#bb5c17"/><stop offset="0.750" stop-color="#c65500"/><stop offset="0.875" stop-color="#d04d00"/><stop offset="1.000" stop-color="#d94200"/></linearGradient><linearGradient id="g62" gradientUnits="userSpaceOnUse" x1="150.4" y1="0" x2="481.3" y2="0"><stop offset="0.000" stop-color="#717171"/><stop offset="0.125" stop-color="#836d60"/><stop offset="0.250" stop-color="#92694f"/><stop offset="0.375" stop-color="#a0643d"/><stop offset="0.500" stop-color="#ac5f2b"/><stop offset="0.625" stop-color="#b85913"/><stop offset="0.750" stop-color="#c35300"/><stop offset="0.875" stop-color="#cd4a00"/><stop offset="1.000" stop-color="#d63e00"/></linearGradient><linearGradient id="g63" gradientUnits="userSpaceOnUse" x1="150.4" y1="0" x2="481.3" y2="0"><stop offset="0.000" stop-color="#6e6e6e"/><stop offset="0.125" stop-color="#806b5d"/><stop offset="0.250" stop-color="#90674c"/><stop offset="0.375" stop-color="#9d623b"/><stop offset="0.500" stop-color="#aa5d28"/><stop offset="0.625" stop-color="#b5570f"/><stop offset="0.750" stop-color="#c05000"/><stop offset="0.875" stop-color="#ca4700"/><stop offset="1.000" stop-color="#d43b00"/></linearGradient><linearGradient id="g64" gradientUnits="userSpaceOnUse" x1="150.4" y1="0" x2="481.3" y2="0"><stop offset="0.000" stop-color="#6c6c6c"/><stop offset="0.125" stop-color="#7e685b"/><stop offset="0.250" stop-color="#8d644a"/><stop offset="0.375" stop-color="#9b6039"/><stop offset="0.500" stop-color="#a75a26"/><stop offset="0.625" stop-color="#b3540c"/><stop offset="0.750" stop-color="#be4d00"/><stop offset="0.875" stop-color="#c84400"/><stop offset="1.000" stop-color="#d13800"/></linearGradient><linearGradient id="g65" gradientUnits="userSpaceOnUse" x1="150.4" y1="0" x2="481.3" y2="0"><stop offset="0.000" stop-color="#696969"/><stop offset="0.125" stop-color="#7b6659"/><stop offset="0.250" stop-color="#8b6248"/><stop offset="0.375" stop-color="#985d36"/><stop offset="0.500" stop-color="#a55823"/><stop offset="0.625" stop-color="#b05207"/><stop offset="0.750" stop-color="#bb4b00"/><stop offset="0.875" stop-color="#c54100"/><stop offset="1.000" stop-color="#ce3400"/></linearGradient><linearGradient id="g66" gradientUnits="userSpaceOnUse" x1="150.4" y1="0" x2="481.3" y2="0"><stop offset="0.000" stop-color="#676767"/><stop offset="0.125" stop-color="#796356"/><stop offset="0.250" stop-color="#885f45"/><stop offset="0.375" stop-color="#965b34"/><stop offset="0.500" stop-color="#a25520"/><stop offset="0.625" stop-color="#ad4f03"/><stop offset="0.750" stop-color="#b84800"/><stop offset="0.875" stop-color="#c23e00"/><stop offset="1.000" stop-color="#cb3100"/></linearGradient><linearGradient id="g67" gradientUnits="userSpaceOnUse" x1="150.4" y1="0" x2="481.3" y2="0"><stop offset="0.000" stop-color="#656565"/><stop offset="0.125" stop-color="#776154"/><stop offset="0.250" stop-color="#865d43"/><stop offset="0.375" stop-color="#935831"/><stop offset="0.500" stop-color="#9f531e"/><stop offset="0.625" stop-color="#ab4d00"/><stop offset="0.750" stop-color="#b54500"/><stop offset="0.875" stop-color="#bf3b00"/><stop offset="1.000" stop-color="#c82d00"/></linearGradient><linearGradient id="g68" gradientUnits="userSpaceOnUse" x1="150.4" y1="0" x2="481.3" y2="0"><stop offset="0.000" stop-color="#626262"/><stop offset="0.125" stop-color="#745f52"/><stop offset="0.250" stop-color="#835b41"/><stop offset="0.375" stop-color="#91562f"/><stop offset="0.500" stop-color="#9d501b"/><stop offset="0.625" stop-color="#a84a00"/><stop offset="0.750" stop-color="#b34200"/><stop offset="0.875" stop-color="#bc3800"/><stop offset="1.000" stop-color="#c62900"/></linearGradient><linearGradient id="g69" gradientUnits="userSpaceOnUse" x1="150.4" y1="0" x2="481.3" y2="0"><stop offset="0.000" stop-color="#606060"/><stop offset="0.125" stop-color="#725c4f"/><stop offset="0.250" stop-color="#81583e"/><stop offset="0.375" stop-color="#8e542d"/><stop offset="0.500" stop-color="#9a4e18"/><stop offset="0.625" stop-color="#a54800"/><stop offset="0.750" stop-color="#b04000"/><stop offset="0.875" stop-color="#ba3500"/><stop offset="1.000" stop-color="#c32500"/></linearGradient><linearGradient id="g70" gradientUnits="userSpaceOnUse" x1="150.4" y1="0" x2="481.3" y2="0"><stop offset="0.000" stop-color="#5e5e5e"/><stop offset="0.125" stop-color="#705a4d"/><stop offset="0.250" stop-color="#7e563c"/><stop offset="0.375" stop-color="#8c512a"/><stop offset="0.500" stop-color="#974c15"/><stop offset="0.625" stop-color="#a34500"/><stop offset="0.750" stop-color="#ad3d00"/><stop offset="0.875" stop-color="#b73200"/><stop offset="1.000" stop-color="#c02100"/></linearGradient><linearGradient id="g71" gradientUnits="userSpaceOnUse" x1="150.4" y1="0" x2="481.3" y2="0"><stop offset="0.000" stop-color="#5b5b5b"/><stop offset="0.125" stop-color="#6d584b"/><stop offset="0.250" stop-color="#7c543a"/><stop offset="0.375" stop-color="#894f28"/><stop offset="0.500" stop-color="#954913"/><stop offset="0.625" stop-color="#a04200"/><stop offset="0.750" stop-color="#ab3a00"/><stop offset="0.875" stop-color="#b42f00"/><stop offset="1.000" stop-color="#bd1d00"/></linearGradient><linearGradient id="g72" gradientUnits="userSpaceOnUse" x1="150.4" y1="0" x2="481.3" y2="0"><stop offset="0.000" stop-color="#595959"/><stop offset="0.125" stop-color="#6b5548"/><stop offset="0.250" stop-color="#7a5137"/><stop offset="0.375" stop-color="#864c25"/><stop offset="0.500" stop-color="#924710"/><stop offset="0.625" stop-color="#9d4000"/><stop offset="0.750" stop-color="#a83700"/><stop offset="0.875" stop-color="#b22b00"/><stop offset="1.000" stop-color="#bb1800"/></linearGradient><linearGradient id="g73" gradientUnits="userSpaceOnUse" x1="150.4" y1="0" x2="481.3" y2="0"><stop offset="0.000" stop-color="#575757"/><stop offset="0.125" stop-color="#695346"/><stop offset="0.250" stop-color="#774f35"/><stop offset="0.375" stop-color="#844a23"/><stop offset="0.500" stop-color="#90440d"/><stop offset="0.625" stop-color="#9b3d00"/><stop offset="0.750" stop-color="#a53500"/><stop offset="0.875" stop-color="#af2800"/><stop offset="1.000" stop-color="#b81200"/></linearGradient><linearGradient id="g74" gradientUnits="userSpaceOnUse" x1="150.4" y1="0" x2="481.3" y2="0"><stop offset="0.000" stop-color="#555555"/><stop offset="0.125" stop-color="#665144"/><stop offset="0.250" stop-color="#754d33"/><stop offset="0.375" stop-color="#814821"/><stop offset="0.500" stop-color="#8d4209"/><stop offset="0.625" stop-color="#983b00"/><stop offset="0.750" stop-color="#a23200"/><stop offset="0.875" stop-color="#ac2400"/><stop offset="1.000" stop-color="#b50a00"/></linearGradient><linearGradient id="g75" gradientUnits="userSpaceOnUse" x1="150.4" y1="0" x2="481.3" y2="0"><stop offset="0.000" stop-color="#525252"/><stop offset="0.125" stop-color="#644f42"/><stop offset="0.250" stop-color="#724a31"/><stop offset="0.375" stop-color="#7f451e"/><stop offset="0.500" stop-color="#8a3f06"/><stop offset="0.625" stop-color="#953800"/><stop offset="0.750" stop-color="#a02f00"/><stop offset="0.875" stop-color="#a92100"/><stop offset="1.000" stop-color="#b20100"/></linearGradient><linearGradient id="g76" gradientUnits="userSpaceOnUse" x1="150.4" y1="0" x2="481.3" y2="0"><stop offset="0.000" stop-color="#505050"/><stop offset="0.125" stop-color="#624c3f"/><stop offset="0.250" stop-color="#70482e"/><stop offset="0.375" stop-color="#7c431c"/><stop offset="0.500" stop-color="#883d03"/><stop offset="0.625" stop-color="#933600"/><stop offset="0.750" stop-color="#9d2c00"/><stop offset="0.875" stop-color="#a71d00"/><stop offset="1.000" stop-color="#b00000"/></linearGradient><linearGradient id="g77" gradientUnits="userSpaceOnUse" x1="150.4" y1="0" x2="481.3" y2="0"><stop offset="0.000" stop-color="#4e4e4e"/><stop offset="0.125" stop-color="#5f4a3d"/><stop offset="0.250" stop-color="#6d462c"/><stop offset="0.375" stop-color="#7a411a"/><stop offset="0.500" stop-color="#853b01"/><stop offset="0.625" stop-color="#903300"/><stop offset="0.750" stop-color="#9a2900"/><stop offset="0.875" stop-color="#a41800"/><stop offset="1.000" stop-color="#ad0000"/></linearGradient><linearGradient id="g78" gradientUnits="userSpaceOnUse" x1="150.4" y1="0" x2="481.3" y2="0"><stop offset="0.000" stop-color="#4c4c4c"/><stop offset="0.125" stop-color="#5d483b"/><stop offset="0.250" stop-color="#6b442a"/><stop offset="0.375" stop-color="#773e17"/><stop offset="0.500" stop-color="#833800"/><stop offset="0.625" stop-color="#8d3000"/><stop offset="0.750" stop-color="#982600"/><stop offset="0.875" stop-color="#a11400"/><stop offset="1.000" stop-color="#aa0000"/></linearGradient><linearGradient id="g79" gradientUnits="userSpaceOnUse" x1="150.4" y1="0" x2="481.3" y2="0"><stop offset="0.000" stop-color="#494949"/><stop offset="0.125" stop-color="#5b4639"/><stop offset="0.250" stop-color="#694128"/><stop offset="0.375" stop-color="#753c15"/><stop offset="0.500" stop-color="#803600"/><stop offset="0.625" stop-color="#8b2e00"/><stop offset="0.750" stop-color="#952300"/><stop offset="0.875" stop-color="#9f0e00"/><stop offset="1.000" stop-color="#a80000"/></linearGradient><linearGradient id="g80" gradientUnits="userSpaceOnUse" x1="150.4" y1="0" x2="481.3" y2="0"><stop offset="0.000" stop-color="#474747"/><stop offset="0.125" stop-color="#584337"/><stop offset="0.250" stop-color="#663f26"/><stop offset="0.375" stop-color="#723a12"/><stop offset="0.500" stop-color="#7d3300"/><stop offset="0.625" stop-color="#882b00"/><stop offset="0.750" stop-color="#931f00"/><stop offset="0.875" stop-color="#9c0700"/><stop offset="1.000" stop-color="#a50000"/></linearGradient><linearGradient id="g81" gradientUnits="userSpaceOnUse" x1="150.4" y1="0" x2="481.3" y2="0"><stop offset="0.000" stop-color="#454545"/><stop offset="0.125" stop-color="#564134"/><stop offset="0.250" stop-color="#643d23"/><stop offset="0.375" stop-color="#703810"/><stop offset="0.500" stop-color="#7b3100"/><stop offset="0.625" stop-color="#862800"/><stop offset="0.750" stop-color="#901c00"/><stop offset="0.875" stop-color="#990000"/><stop offset="1.000" stop-color="#a20000"/></linearGradient><linearGradient id="g82" gradientUnits="userSpaceOnUse" x1="150.4" y1="0" x2="481.3" y2="0"><stop offset="0.000" stop-color="#434343"/><stop offset="0.125" stop-color="#543f32"/><stop offset="0.250" stop-color="#613b21"/><stop offset="0.375" stop-color="#6d350e"/><stop offset="0.500" stop-color="#782f00"/><stop offset="0.625" stop-color="#832600"/><stop offset="0.750" stop-color="#8d1800"/><stop offset="0.875" stop-color="#970000"/><stop offset="1.000" stop-color="#a00000"/></linearGradient><linearGradient id="g83" gradientUnits="userSpaceOnUse" x1="150.4" y1="0" x2="481.3" y2="0"><stop offset="0.000" stop-color="#414141"/><stop offset="0.125" stop-color="#513d30"/><stop offset="0.250" stop-color="#5f381f"/><stop offset="0.375" stop-color="#6b330b"/><stop offset="0.500" stop-color="#762c00"/><stop offset="0.625" stop-color="#802300"/><stop offset="0.750" stop-color="#8b1400"/><stop offset="0.875" stop-color="#940000"/><stop offset="1.000" stop-color="#9d0000"/></linearGradient><linearGradient id="g84" gradientUnits="userSpaceOnUse" x1="150.4" y1="0" x2="481.3" y2="0"><stop offset="0.000" stop-color="#3e3e3e"/><stop offset="0.125" stop-color="#4f3b2e"/><stop offset="0.250" stop-color="#5d361d"/><stop offset="0.375" stop-color="#683108"/><stop offset="0.500" stop-color="#732a00"/><stop offset="0.625" stop-color="#7e2000"/><stop offset="0.750" stop-color="#881000"/><stop offset="0.875" stop-color="#920000"/><stop offset="1.000" stop-color="#9a0000"/></linearGradient><linearGradient id="g85" gradientUnits="userSpaceOnUse" x1="150.4" y1="0" x2="481.3" y2="0"><stop offset="0.000" stop-color="#3c3c3c"/><stop offset="0.125" stop-color="#4d392c"/><stop offset="0.250" stop-color="#5a341b"/><stop offset="0.375" stop-color="#662f06"/><stop offset="0.500" stop-color="#712700"/><stop offset="0.625" stop-color="#7b1d00"/><stop offset="0.750" stop-color="#860b00"/><stop offset="0.875" stop-color="#8f0000"/><stop offset="1.000" stop-color="#980000"/></linearGradient><linearGradient id="g86" gradientUnits="userSpaceOnUse" x1="150.4" y1="0" x2="481.3" y2="0"><stop offset="0.000" stop-color="#3a3a3a"/><stop offset="0.125" stop-color="#4b362a"/><stop offset="0.250" stop-color="#583219"/><stop offset="0.375" stop-color="#632c03"/><stop offset="0.500" stop-color="#6e2500"/><stop offset="0.625" stop-color="#791a00"/><stop offset="0.750" stop-color="#830500"/><stop offset="0.875" stop-color="#8c0000"/><stop offset="1.000" stop-color="#950000"/></linearGradient><linearGradient id="g87" gradientUnits="userSpaceOnUse" x1="150.4" y1="0" x2="481.3" y2="0"><stop offset="0.000" stop-color="#383838"/><stop offset="0.125" stop-color="#493528"/><stop offset="0.250" stop-color="#563017"/><stop offset="0.375" stop-color="#612a00"/><stop offset="0.500" stop-color="#6c2300"/><stop offset="0.625" stop-color="#771800"/><stop offset="0.750" stop-color="#810100"/><stop offset="0.875" stop-color="#8a0000"/><stop offset="1.000" stop-color="#930000"/></linearGradient><linearGradient id="g88" gradientUnits="userSpaceOnUse" x1="150.4" y1="0" x2="481.3" y2="0"><stop offset="0.000" stop-color="#373737"/><stop offset="0.125" stop-color="#473326"/><stop offset="0.250" stop-color="#542e15"/><stop offset="0.375" stop-color="#5f2800"/><stop offset="0.500" stop-color="#6a2100"/><stop offset="0.625" stop-color="#751500"/><stop offset="0.750" stop-color="#7f0000"/><stop offset="0.875" stop-color="#880000"/><stop offset="1.000" stop-color="#910000"/></linearGradient></defs>
<g clip-path="url(#shp)"><rect x="150" y="126" width="310" height="3" fill="url(#g0)"/><rect x="150" y="129" width="310" height="3" fill="url(#g1)"/><rect x="150" y="132" width="310" height="3" fill="url(#g2)"/><rect x="150" y="135" width="310" height="3" fill="url(#g3)"/><rect x="150" y="138" width="310" height="3" fill="url(#g4)"/><rect x="150" y="141" width="310" height="3" fill="url(#g5)"/><rect x="150" y="144" width="310" height="3" fill="url(#g6)"/><rect x="150" y="147" width="310" height="3" fill="url(#g7)"/><rect x="150" y="150" width="310" height="3" fill="url(#g8)"/><rect x="150" y="153" width="310" height="3" fill="url(#g9)"/><rect x="150" y="156" width="310" height="3" fill="url(#g10)"/><rect x="150" y="159" width="310" height="3" fill="url(#g11)"/><rect x="150" y="162" width="310" height="3" fill="url(#g12)"/><rect x="150" y="165" width="310" height="3" fill="url(#g13)"/><rect x="150" y="168" width="310" height="3" fill="url(#g14)"/><rect x="150" y="171" width="310" height="3" fill="url(#g15)"/><rect x="150" y="174" width="310" height="3" fill="url(#g16)"/><rect x="150" y="177" width="310" height="3" fill="url(#g17)"/><rect x="150" y="180" width="310" height="3" fill="url(#g18)"/><rect x="150" y="183" width="310" height="3" fill="url(#g19)"/><rect x="150" y="186" width="310" height="3" fill="url(#g20)"/><rect x="150" y="189" width="310" height="3" fill="url(#g21)"/><rect x="150" y="192" width="310" height="3" fill="url(#g22)"/><rect x="150" y="195" width="310" height="3" fill="url(#g23)"/><rect x="150" y="198" width="310" height="3" fill="url(#g24)"/><rect x="150" y="201" width="310" height="3" fill="url(#g25)"/><rect x="150" y="204" width="310" height="3" fill="url(#g26)"/><rect x="150" y="207" width="310" height="3" fill="url(#g27)"/><rect x="150" y="210" width="310" height="3" fill="url(#g28)"/><rect x="150" y="213" width="310" height="3" fill="url(#g29)"/><rect x="150" y="216" width="310" height="3" fill="url(#g30)"/><rect x="150" y="219" width="310" height="3" fill="url(#g31)"/><rect x="150" y="222" width="310" height="3" fill="url(#g32)"/><rect x="150" y="225" width="310" height="3" fill="url(#g33)"/><rect x="150" y="228" width="310" height="3" fill="url(#g34)"/><rect x="150" y="231" width="310" height="3" fill="url(#g35)"/><rect x="150" y="234" width="310" height="3" fill="url(#g36)"/><rect x="150" y="237" width="310" height="3" fill="url(#g37)"/><rect x="150" y="240" width="310" height="3" fill="url(#g38)"/><rect x="150" y="243" width="310" height="3" fill="url(#g39)"/><rect x="150" y="246" width="310" height="3" fill="url(#g40)"/><rect x="150" y="249" width="310" height="3" fill="url(#g41)"/><rect x="150" y="252" width="310" height="3" fill="url(#g42)"/><rect x="150" y="255" width="310" height="3" fill="url(#g43)"/><rect x="150" y="258" width="310" height="3" fill="url(#g44)"/><rect x="150" y="261" width="310" height="3" fill="url(#g45)"/><rect x="150" y="264" width="310" height="3" fill="url(#g46)"/><rect x="150" y="267" width="310" height="3" fill="url(#g47)"/><rect x="150" y="270" width="310" height="3" fill="url(#g48)"/><rect x="150" y="273" width="310" height="3" fill="url(#g49)"/><rect x="150" y="276" width="310" height="3" fill="url(#g50)"/><rect x="150" y="279" width="310" height="3" fill="url(#g51)"/><rect x="150" y="282" width="310" height="3" fill="url(#g52)"/><rect x="150" y="285" width="310" height="3" fill="url(#g53)"/><rect x="150" y="288" width="310" height="3" fill="url(#g54)"/><rect x="150" y="291" width="310" height="3" fill="url(#g55)"/><rect x="150" y="294" width="310" height="3" fill="url(#g56)"/><rect x="150" y="297" width="310" height="3" fill="url(#g57)"/><rect x="150" y="300" width="310" height="3" fill="url(#g58)"/><rect x="150" y="303" width="310" height="3" fill="url(#g59)"/><rect x="150" y="306" width="310" height="3" fill="url(#g60)"/><rect x="150" y="309" width="310" height="3" fill="url(#g61)"/><rect x="150" y="312" width="310" height="3" fill="url(#g62)"/><rect x="150" y="315" width="310" height="3" fill="url(#g63)"/><rect x="150" y="318" width="310" height="3" fill="url(#g64)"/><rect x="150" y="321" width="310" height="3" fill="url(#g65)"/><rect x="150" y="324" width="310" height="3" fill="url(#g66)"/><rect x="150" y="327" width="310" height="3" fill="url(#g67)"/><rect x="150" y="330" width="310" height="3" fill="url(#g68)"/><rect x="150" y="333" width="310" height="3" fill="url(#g69)"/><rect x="150" y="336" width="310" height="3" fill="url(#g70)"/><rect x="150" y="339" width="310" height="3" fill="url(#g71)"/><rect x="150" y="342" width="310" height="3" fill="url(#g72)"/><rect x="150" y="345" width="310" height="3" fill="url(#g73)"/><rect x="150" y="348" width="310" height="3" fill="url(#g74)"/><rect x="150" y="351" width="310" height="3" fill="url(#g75)"/><rect x="150" y="354" width="310" height="3" fill="url(#g76)"/><rect x="150" y="357" width="310" height="3" fill="url(#g77)"/><rect x="150" y="360" width="310" height="3" fill="url(#g78)"/><rect x="150" y="363" width="310" height="3" fill="url(#g79)"/><rect x="150" y="366" width="310" height="3" fill="url(#g80)"/><rect x="150" y="369" width="310" height="3" fill="url(#g81)"/><rect x="150" y="372" width="310" height="3" fill="url(#g82)"/><rect x="150" y="375" width="310" height="3" fill="url(#g83)"/><rect x="150" y="378" width="310" height="3" fill="url(#g84)"/><rect x="150" y="381" width="310" height="3" fill="url(#g85)"/><rect x="150" y="384" width="310" height="3" fill="url(#g86)"/><rect x="150" y="387" width="310" height="3" fill="url(#g87)"/><rect x="150" y="390" width="310" height="3" fill="url(#g88)"/></g>
<ellipse cx="152" cy="144.5" rx="2" ry="1.3" fill="#606060"/><ellipse cx="356" cy="311.3" rx="2.2" ry="1.3" fill="#c85a22" transform="rotate(-20 356 311.3)"/><circle cx="498" cy="283" r="5.2" fill="none" stroke="#9c9c9c" stroke-width="0.9"/><circle cx="498" cy="283" r="6.5" fill="none" stroke="#303030" stroke-width="1.1"/>
</svg>
<div class="lbl" style="left:150px;top:492px;font-size:12.5px;letter-spacing:0.95px;color:#8c8c8c;-webkit-text-stroke:0;">Hold down <span style="display:inline-block;width:20px;"></span> to make fine adjustments</div>
<svg class="a" style="left:0;top:0" width="1024" height="799"><path d="M222,495.5 h4 l5.5,6.5 h8 M231,495.5 h8.5" stroke="#8c8c8c" stroke-width="1.1" fill="none"/></svg>

<!-- swatches -->
<div class="a" style="left:554.5px;top:92.5px;width:71px;height:80px;background:#fd7a33;border:1px solid #5a2a12;box-sizing:border-box;"></div>
<div class="a" style="left:636px;top:92.5px;width:291px;height:80px;background:#e65208;border:1px solid #5a2a12;box-sizing:border-box;"></div>
<svg class="a" style="left:0;top:0" width="1024" height="799">
<g id="warn">
<polygon points="647,152 653.5,162.5 640.5,162.5" fill="#fff" stroke="#111" stroke-width="1.3" stroke-linejoin="round"/>
<rect x="646.4" y="155" width="1.2" height="4" fill="#111"/><rect x="646.4" y="160" width="1.2" height="1.2" fill="#111"/>
<rect x="642" y="163" width="9.4" height="9" fill="#fff"/>
<text x="646.7" y="171" font-family="Liberation Sans" font-size="8.5" text-anchor="middle" fill="#111" stroke="#111" stroke-width="0.3">M</text>
</g>
<g transform="translate(21.5,0)">
<polygon points="647,152 653.5,162.5 640.5,162.5" fill="#fff" stroke="#111" stroke-width="1.3" stroke-linejoin="round"/>
<rect x="646.4" y="155" width="1.2" height="4" fill="#111"/><rect x="646.4" y="160" width="1.2" height="1.2" fill="#111"/>
<rect x="642" y="163" width="9.4" height="9" fill="#fff"/>
<text x="646.7" y="171" font-family="Liberation Sans" font-size="8.5" text-anchor="middle" fill="#111" stroke="#111" stroke-width="0.3">P</text>
</g>
</svg>

<!-- Lab popup -->
<div class="a" style="left:616.5px;top:184px;width:66px;height:21px;border-radius:5px;background:#fff;box-shadow:0 0 0 0.5px rgba(0,0,0,0.2),0 1px 1px rgba(0,0,0,0.15);overflow:hidden;">
 <div class="a" style="left:47.5px;top:0;width:19px;height:21px;background:linear-gradient(#cc72cc,#ad44ad);"></div>
 <div class="lbl" style="left:13.8px;top:3.8px;font-size:14px;letter-spacing:0.3px;color:#3a3a3a;">Lab:</div>
 <svg class="a" style="left:47.5px;top:0" width="19" height="21"><path d="M6.5,8.5 l3,-3 l3,3 M6.5,12.5 l3,3 l3,-3" stroke="#fff" stroke-width="1.4" fill="none"/></svg>
</div>
<!-- focus ring field -->
<div class="a" style="left:684.5px;top:179.5px;width:64.5px;height:31px;border-radius:5px;background:#b48ab8;"></div>
<div class="fld" style="left:689.5px;top:184px;width:55px;height:22.5px;border:none;"></div>
<div class="a" style="left:693.2px;top:187px;width:39.5px;height:16.5px;background:#dcc6e0;"></div>
<div class="lbl" style="left:693.2px;top:188.8px;font-size:14.5px;color:#2a2a2a;letter-spacing:0.5px;">49.38</div>
<div class="step" style="left:751.8px;top:184.7px;width:11.5px;height:21.5px;"></div>
<div class="fld" style="left:770.3px;top:183.5px;width:56px;height:23.8px;"></div>
<div class="lbl" style="left:774.8px;top:188.8px;font-size:14.5px;color:#2a2a2a;letter-spacing:-0.45px;">51.78</div>
<div class="step" style="left:833px;top:184.7px;width:11.5px;height:21.5px;"></div>
<div class="fld" style="left:851.2px;top:183.5px;width:56.4px;height:23.8px;"></div>
<div class="lbl" style="left:855.3px;top:188.8px;font-size:14.5px;color:#2a2a2a;letter-spacing:0.15px;">76.55</div>
<div class="step" style="left:914.5px;top:184.7px;width:11.5px;height:21.5px;"></div>
<svg class="a" style="left:0;top:0" width="1024" height="799" fill="none" stroke="#505050" stroke-width="1.4" stroke-linecap="round" stroke-linejoin="round">
<path d="M754.4,193 l3.2,-3 l3.2,3 M754.4,198.5 l3.2,3 l3.2,-3"/>
<path d="M835.5,193 l3.2,-3 l3.2,3 M835.5,198.5 l3.2,3 l3.2,-3"/>
<path d="M917,193 l3.2,-3 l3.2,3 M917,198.5 l3.2,3 l3.2,-3"/>
</svg>

<!-- bars -->
<div class="a" style="left:554.4px;top:217px;width:373px;height:41px;background:#fff;"></div>
<div class="a" style="left:554.4px;top:221.6px;width:373px;height:32.5px;background:linear-gradient(to right,#440006 0%,#5c000c 15%,#8a0a10 27%,#c02c1e 38%,#ec5420 49%,#ff7a30 59%,#ffa65c 80%,#ffe690 100%);"></div>
<div class="a" style="left:554.4px;top:268px;width:373px;height:40.5px;background:#fff;"></div>
<div class="a" style="left:554.4px;top:272.3px;width:373px;height:32.5px;background:linear-gradient(to right,#838383 0%,#a07868 30%,#c06838 58%,#d85a18 80%,#ea5206 100%);"></div>
<div class="a" style="left:554.4px;top:318.8px;width:373px;height:40.5px;background:#fff;"></div>
<div class="a" style="left:554.4px;top:322.6px;width:373px;height:33px;background:linear-gradient(to right,#ff0090 0%,#ff0070 7.5%,#ff1038 10%,#ff3820 13%,#e85010 16%,#c06c00 21%,#a87800 26%,#808800 31%,#409810 35%,#00a000 37.5%,#00a050 43%,#00a2a4 52%,#00a6ff 60%,#0094ff 70%,#0080ff 82%,#8070ff 85%,#c058f0 89%,#f020c0 94%,#ff0098 100%);"></div>
<svg class="a" style="left:0;top:0" width="1024" height="799" fill="#fff" stroke="#2f2f2f" stroke-width="1.3" stroke-linejoin="miter">
<polygon points="732.7,218 744.7,218 738.7,229.5"/>
<polygon points="732.7,257.5 744.7,257.5 738.7,245.5"/>
<polygon points="893,268.8 905,268.8 899,280.3"/>
<polygon points="893,308.3 905,308.3 899,296.3"/>
<polygon points="606.3,319.5 618.3,319.5 612.3,331"/>
<polygon points="606.3,359 618.3,359 612.3,347"/>
</svg>

<!-- transparency -->
<div class="cb" style="left:555px;top:370.5px;width:17px;height:17px;"></div>
<div class="lbl" style="left:578px;top:372.5px;font-size:16px;letter-spacing:0.58px;color:#2e2e2e;">Transparency</div>
<div class="a" style="left:572px;top:406px;width:291px;height:3px;border-radius:2px;background:#d2d2d2;"></div>
<div class="a" style="left:566px;top:398px;width:19px;height:19px;border-radius:50%;background:#f4f4f4;box-shadow:0 0 0 0.5px rgba(0,0,0,0.12),0 1px 1.5px rgba(0,0,0,0.15);"></div>
<div class="fld" style="left:870.5px;top:395px;width:57px;height:24.5px;border-color:#dadada;"></div>
<div class="lbl" style="left:875.5px;top:402px;font-size:14.5px;color:#9a9a9a;">0</div>

<!-- view -->
<div class="lbl" style="left:641px;top:474px;font-size:16px;letter-spacing:0.8px;color:#2e2e2e;">View:</div>
<svg class="a" style="left:693.5px;top:459.3px" width="40" height="40">
<defs>
<linearGradient id="v1t" x1="5" y1="0" x2="37" y2="0" gradientUnits="userSpaceOnUse"><stop offset="0" stop-color="#30e030"/><stop offset="0.5" stop-color="#c8b040"/><stop offset="1" stop-color="#ff8a30"/></linearGradient>
<linearGradient id="v1b" x1="5" y1="0" x2="37" y2="0" gradientUnits="userSpaceOnUse"><stop offset="0.2" stop-color="#20c8ff"/><stop offset="0.6" stop-color="#b090f0"/><stop offset="1" stop-color="#ff70f0"/></linearGradient>
<linearGradient id="v1m" x1="0" y1="5" x2="0" y2="35" gradientUnits="userSpaceOnUse"><stop offset="0.1" stop-color="#fff" stop-opacity="0"/><stop offset="0.95" stop-color="#fff" stop-opacity="1"/></linearGradient>
<mask id="v1mask"><rect width="40" height="40" fill="url(#v1m)"/></mask>
</defs>
<rect width="40" height="40" fill="#8e8e8e"/>
<path d="M4.9,6.2 L30.6,5.1 Q32,20 37.7,34.6 L17.5,34.6 Q9,18 4.9,6.2 Z" fill="url(#v1t)"/>
<path d="M4.9,6.2 L30.6,5.1 Q32,20 37.7,34.6 L17.5,34.6 Q9,18 4.9,6.2 Z" fill="url(#v1b)" mask="url(#v1mask)"/>
</svg>
<svg class="a" style="left:751.2px;top:459.3px" width="40" height="40">
<defs>
<linearGradient id="v2a" x1="0" y1="0" x2="37" y2="0" gradientUnits="userSpaceOnUse"><stop offset="0" stop-color="#f0fff0"/><stop offset="0.5" stop-color="#90f090"/><stop offset="1" stop-color="#18e030"/></linearGradient>
<linearGradient id="v2b" x1="0" y1="0" x2="0" y2="35" gradientUnits="userSpaceOnUse"><stop offset="0.05" stop-color="#000" stop-opacity="0"/><stop offset="1" stop-color="#000" stop-opacity="1"/></linearGradient>
</defs>
<rect width="40" height="40" fill="#5c5c5c"/>
<path d="M0,1.3 Q18,3 37.4,8.4 Q25,22 0,35.2 Z" fill="url(#v2a)"/>
<path d="M0,1.3 Q18,3 37.4,8.4 Q25,22 0,35.2 Z" fill="url(#v2b)"/>
</svg>
<svg class="a" style="left:814.1px;top:459.3px" width="40" height="40">
<defs>
<linearGradient id="v3a" x1="0" y1="0" x2="40" y2="0" gradientUnits="userSpaceOnUse"><stop offset="0" stop-color="#ff7090"/><stop offset="0.17" stop-color="#ff8830"/><stop offset="0.3" stop-color="#c0c040"/><stop offset="0.4" stop-color="#40d040"/><stop offset="0.6" stop-color="#20d0d0"/><stop offset="0.76" stop-color="#60a8ff"/><stop offset="0.9" stop-color="#ff70e8"/><stop offset="1" stop-color="#ff80c0"/></linearGradient>
<linearGradient id="v3b" x1="0" y1="5" x2="0" y2="40" gradientUnits="userSpaceOnUse"><stop offset="0.3" stop-color="#a0a0a0" stop-opacity="0"/><stop offset="1" stop-color="#a0a0a0" stop-opacity="0.9"/></linearGradient>
</defs>
<rect width="40" height="40" fill="#959595"/>
<path d="M0,40 L0,18.8 L2.9,18.1 Q5,9 6.7,9.3 Q8.5,12 10.5,16.9 L13.1,15 Q14.5,6.5 15.6,6.7 Q16.5,10 18.1,17.5 L21.3,25.1 Q23,27.5 24.5,27 L27.7,24.5 L30.2,21.3 L33.4,18.8 Q35,4 35.9,4.2 Q37,5 38.3,13.7 L40,16.5 L40,40 Z" fill="url(#v3a)"/>
<path d="M0,40 L0,18.8 L2.9,18.1 Q5,9 6.7,9.3 Q8.5,12 10.5,16.9 L13.1,15 Q14.5,6.5 15.6,6.7 Q16.5,10 18.1,17.5 L21.3,25.1 Q23,27.5 24.5,27 L27.7,24.5 L30.2,21.3 L33.4,18.8 Q35,4 35.9,4.2 Q37,5 38.3,13.7 L40,16.5 L40,40 Z" fill="url(#v3b)"/>
</svg>

<!-- gamut -->
<div class="lbl" style="left:627px;top:533.5px;font-size:16px;letter-spacing:1.0px;color:#2e2e2e;">Gamut:</div>
<div class="cb" style="left:693.5px;top:514.5px;"></div>
<div class="lbl" style="left:714px;top:515px;font-size:14px;letter-spacing:0.95px;color:#2e2e2e;">Monitor</div>
<div class="cb" style="left:693.5px;top:534.5px;background:linear-gradient(#c266c4,#ad4cb0);border-color:#a04aa2;"></div>
<svg class="a" style="left:693.5px;top:534.5px" width="15" height="15"><path d="M3.6,7.6 l2.6,3 l5,-7" stroke="#fff" stroke-width="1.8" fill="none"/></svg>
<div class="lbl" style="left:714px;top:535.5px;font-size:14px;letter-spacing:0.95px;color:#2e2e2e;">Printer</div>
<div class="cb" style="left:693.5px;top:555px;"></div>
<div class="lbl" style="left:714px;top:555px;font-size:14px;letter-spacing:0.45px;color:#2e2e2e;">ICC Profile</div>
<div class="btn" style="left:851px;top:552px;width:49px;height:21px;font-size:14px;color:#8a8a8a;line-height:19px;letter-spacing:0.8px;border-color:#e0e0e0;box-shadow:0 0.5px 1px rgba(0,0,0,0.08);">Open</div>
<div class="lbl" style="left:744.5px;top:582px;font-size:14px;letter-spacing:0.45px;color:#2e2e2e;">SWOP2006_Coated3v2</div>

<!-- dE -->
<div class="lbl" style="left:554.5px;top:608.5px;font-size:16px;letter-spacing:0px;color:#2e2e2e;">dE</div>
<div class="a" style="left:581px;top:613.5px;width:256px;height:3.5px;border-radius:2px;background:#c6c6c6;"></div>
<div class="a" style="left:581px;top:613.5px;width:37px;height:3.5px;border-radius:2px;background:#b75ab9;"></div>
<div class="a" style="left:608px;top:605.5px;width:20px;height:20px;border-radius:50%;background:#fff;box-shadow:0 0 0 0.5px rgba(0,0,0,0.2),0 1px 1.5px rgba(0,0,0,0.2);"></div>
<div class="fld" style="left:844px;top:604px;width:56px;height:23px;"></div>
<div class="lbl" style="left:848px;top:608px;font-size:15px;color:#2a2a2a;letter-spacing:0.1px;">1.2</div>
<svg class="a" style="left:906px;top:603px" width="18" height="22">
<path d="M13,12 V7 A4.5,4.5 0 0 0 4,7" stroke="#1a1a1a" stroke-width="1.7" fill="none"/>
<rect x="2.3" y="11.5" width="12.5" height="8.5" rx="1" fill="#1a1a1a"/>
</svg>

<!-- buttons -->
<div class="btn" style="left:565.5px;top:653px;width:106px;height:26px;line-height:24px;letter-spacing:0.9px;">Compare</div>
<div class="btn" style="left:763.5px;top:653.5px;width:88px;height:25.5px;line-height:24px;letter-spacing:0.9px;">Cancel</div>
<div class="btn" style="left:867.5px;top:653px;width:59.5px;height:26.5px;line-height:25px;background:linear-gradient(#ca6ecc,#a73ea9);border-color:#a548a7;color:#fff;">OK</div>
</body></html>
